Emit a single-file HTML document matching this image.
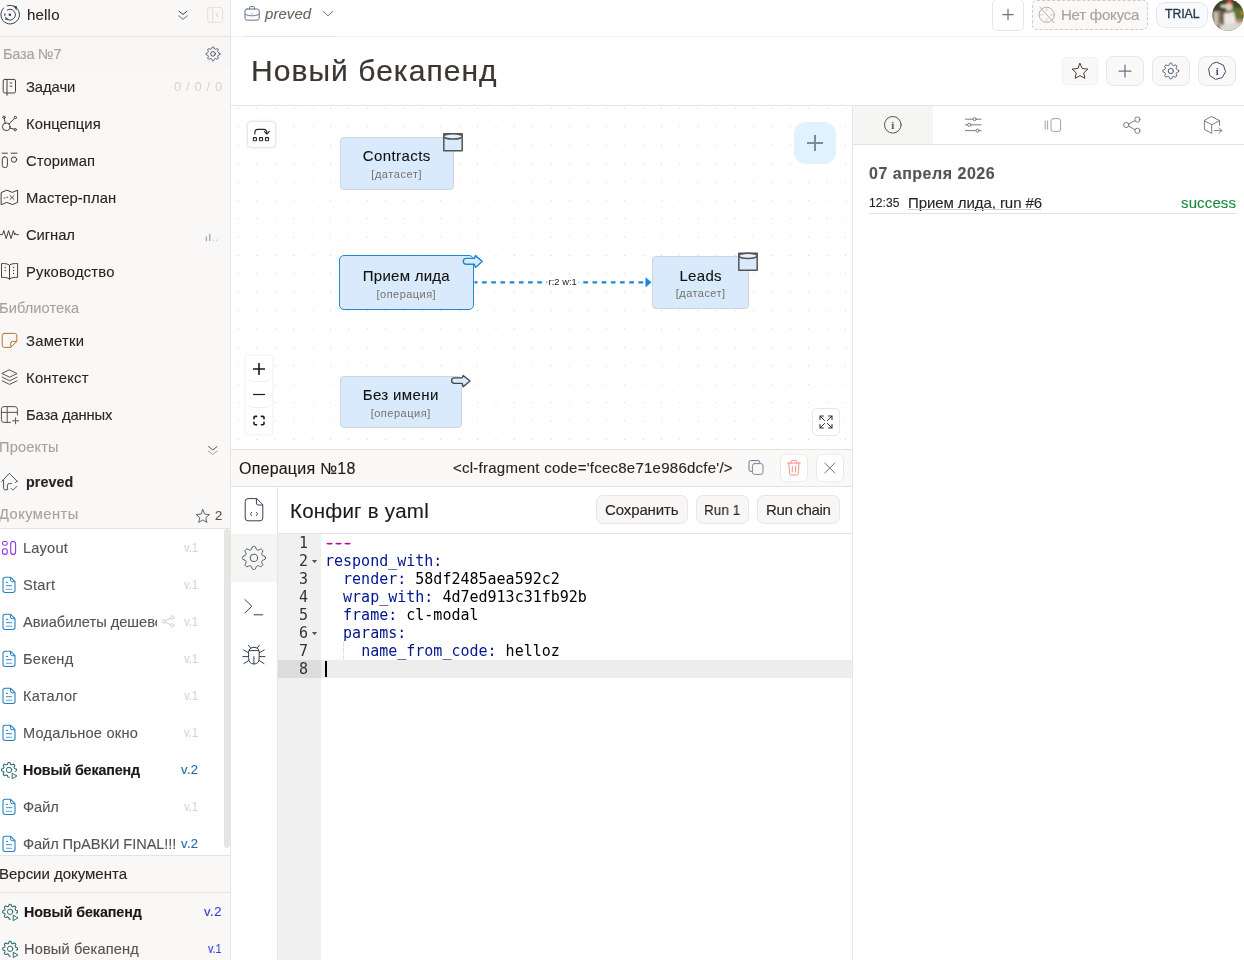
<!DOCTYPE html>
<html lang="ru">
<head>
<meta charset="utf-8">
<title>Новый бекапенд</title>
<style>
*{box-sizing:border-box;margin:0;padding:0}
html,body{width:1244px;height:960px;overflow:hidden;background:#fff}
body{font-family:"Liberation Sans",sans-serif;color:#292524;position:relative;font-size:15px}
.abs{position:absolute}
.t{white-space:nowrap;-webkit-text-stroke:.12px}
.n1{-webkit-text-stroke:.1px}
.t,.n1,.n2,.code,.ln{will-change:transform}
svg{display:block;overflow:visible}
.ic{position:absolute;fill:none;stroke:#44403c;stroke-width:1.1;stroke-linecap:round;stroke-linejoin:round}
/* sidebar */
#sb{position:absolute;left:0;top:0;width:231px;height:960px;background:#f9f8f6;border-right:1px solid #e7e5e4}
#sb .t{position:absolute;white-space:nowrap;line-height:20px;height:20px}
.nav{font-size:14.8px;color:#292524;left:26px}
.sec{font-size:14.6px;color:#a8a29e;left:0}
.doc{font-size:14.6px;color:#57534e;left:23px}
.ver{font-size:13px;color:#d6d3d1}

.hl{position:absolute;left:0;width:230px;height:1px;background:#e6e4e2}
/* main */
#top{position:absolute;left:231px;top:0;width:1013px;height:37px;background:#fff}
#hdr{position:absolute;left:231px;top:37px;width:1013px;height:69px;background:#fff;border-bottom:1px solid #e7e5e4}
.btn{position:absolute;border:1px solid #e5e7eb;border-radius:6px;background:#faf9f7}
#cv{position:absolute;left:231px;top:105px;width:621px;height:345px;background:#fff;
 background-image:radial-gradient(circle,#cdcdd6 0.5px,transparent 0.95px);background-size:18.4px 18.4px;background-position:-1.7px -5.9px;overflow:hidden}
.node{position:absolute;background:#d8eafc;border:1px solid #d0d5da;border-radius:4px;text-align:center}
.node .n1{font-size:15px;color:#111;line-height:18px;margin-top:9px;white-space:nowrap;letter-spacing:.3px}
.node .n2{font-size:11px;color:#78716c;line-height:13px;margin-top:3.6px;white-space:nowrap;letter-spacing:.55px}
#rp{position:absolute;left:852px;top:105px;width:392px;height:855px;background:#fff;border-left:1px solid #e7e5e4}
#bp{position:absolute;left:231px;top:450px;width:621px;height:510px;background:#fff}
.code{position:absolute;left:94px;font-family:"DejaVu Sans Mono","Liberation Mono",monospace;font-size:15px;line-height:18px;height:18px;white-space:pre;color:#000}
.ln{position:absolute;font-family:"DejaVu Sans Mono","Liberation Mono",monospace;font-size:15px;line-height:18px;height:18px;color:#333;width:30px;text-align:right;left:47px}
.k{color:#00168e}
</style>
</head>
<body>
<div id="sb">
  <div id="t1" class="t" style="left:27px;top:5px;font-size:15px;color:#292524;letter-spacing:0.199px;left:27.10px;">hello</div>
  <div class="hl" style="top:36px"></div>
  <div class="abs" style="left:0;top:37px;width:230px;height:31px;background:#f7f6f4"></div>
  <div id="t2" class="t sec" style="left:3px;top:44px;letter-spacing:-0.262px;left:2.90px;">База №7</div>

  <div id="t3" class="t nav" style="top:77px;letter-spacing:-0.078px;left:25.80px;">Задачи</div>
  <div id="t4" class="t" style="left:174px;top:77px;font-size:13px;color:#d6d3d1;letter-spacing:.3px;-webkit-text-stroke:0;letter-spacing:0.603px;left:174.10px;">0 / 0 / 0</div>
  <div id="t5" class="t nav" style="top:114px;letter-spacing:0.046px;left:25.80px;">Концепция</div>
  <div id="t6" class="t nav" style="top:151px;letter-spacing:0.080px;left:25.80px;">Сторимап</div>
  <div id="t7" class="t nav" style="top:188px;letter-spacing:0.103px;left:25.80px;">Мастер-план</div>
  <div id="t8" class="t nav" style="top:225px;letter-spacing:-0.078px;left:25.80px;">Сигнал</div>
  <div id="t9" class="t nav" style="top:262px;letter-spacing:0.192px;left:25.80px;">Руководство</div>
  <div id="t10" class="t sec" style="top:298px;letter-spacing:0.082px;left:-0.90px;">Библиотека</div>
  <div id="t11" class="t nav" style="top:331px;letter-spacing:0.234px;left:25.80px;">Заметки</div>
  <div id="t12" class="t nav" style="top:368px;letter-spacing:0.259px;left:25.80px;">Контекст</div>
  <div id="t13" class="t nav" style="top:405px;letter-spacing:-0.184px;left:25.80px;">База данных</div>
  <div id="t14" class="t sec" style="top:437px;letter-spacing:0.173px;left:-0.60px;">Проекты</div>
  <div id="t15" class="t nav" style="top:472px;font-weight:bold;font-size:14.3px;letter-spacing:0.062px;left:25.80px;">preved</div>
  <div id="t16" class="t sec" style="top:504px;letter-spacing:0.496px;left:-0.60px;">Документы</div>
  <div id="t17" class="t" style="left:214px;top:506px;font-size:13px;color:#57534e;letter-spacing:-0.334px;left:214.90px;">2</div>
  <div class="hl" style="top:528px"></div>

  <div class="abs" id="docs" style="left:0;top:529px;width:230px;height:326px;background:#fff"></div>
  <div class="abs" style="left:224px;top:529px;width:6px;height:319px;background:#e7e5e4;border-radius:3px"></div>

  <div id="t18" class="t doc" style="top:538px;letter-spacing:0.194px;left:22.70px;">Layout</div><div id="t19" class="t ver" style="left:184px;top:538px;transform:scaleX(0.860);transform-origin:0 50%;left:184.20px;">v.1</div>
  <div id="t20" class="t doc" style="top:575px;letter-spacing:0.293px;left:22.70px;">Start</div><div id="t21" class="t ver" style="left:184px;top:575px;transform:scaleX(0.860);transform-origin:0 50%;left:184.20px;">v.1</div>
  <div id="t22" class="t doc" style="top:612px;width:134px;overflow:hidden;letter-spacing:0.004px;left:22.70px;">Авиабилеты дешевого</div><div id="t23" class="t ver" style="left:184px;top:612px;transform:scaleX(0.860);transform-origin:0 50%;left:184.20px;">v.1</div>
  <div id="t24" class="t doc" style="top:649px;letter-spacing:0.253px;left:22.70px;">Бекенд</div><div id="t25" class="t ver" style="left:184px;top:649px;transform:scaleX(0.860);transform-origin:0 50%;left:184.20px;">v.1</div>
  <div id="t26" class="t doc" style="top:686px;letter-spacing:0.256px;left:22.70px;">Каталог</div><div id="t27" class="t ver" style="left:184px;top:686px;transform:scaleX(0.860);transform-origin:0 50%;left:184.20px;">v.1</div>
  <div id="t28" class="t doc" style="top:723px;letter-spacing:0.224px;left:22.70px;">Модальное окно</div><div id="t29" class="t ver" style="left:184px;top:723px;transform:scaleX(0.860);transform-origin:0 50%;left:184.20px;">v.1</div>
  <div id="t30" class="t doc" style="top:760px;font-weight:bold;font-size:14.3px;color:#1c1917;letter-spacing:-0.147px;left:22.70px;">Новый бекапенд</div><div id="t31" class="t ver" style="left:181px;top:760px;color:#1d6fa5;letter-spacing:0.355px;left:180.80px;">v.2</div>
  <div id="t32" class="t doc" style="top:797px;letter-spacing:-0.030px;left:22.70px;">Файл</div><div id="t33" class="t ver" style="left:184px;top:797px;transform:scaleX(0.860);transform-origin:0 50%;left:184.20px;">v.1</div>
  <div id="t34" class="t doc" style="top:834px;letter-spacing:-0.062px;left:22.70px;">Файл ПрАВКИ FINAL!!!</div><div id="t35" class="t ver" style="left:181px;top:834px;color:#1d6fa5;letter-spacing:0.355px;left:180.80px;">v.2</div>

  <div class="hl" style="top:855px"></div>

  <svg class="abs" style="left:0;top:0" width="231" height="960" viewBox="0 0 231 960" fill="none" stroke="#44403c" stroke-width="1" stroke-linecap="round" stroke-linejoin="round">
    <!-- logo -->
    <g stroke="#334155">
      <path d="M7.2 5.8 A9.3 9.3 0 1 1 3.6 8"/>
      <path d="M13.2 5.6 L17.2 6.6 L16.4 10.2 Z" fill="#334155" stroke="none"/>
      <path d="M7.3 10.1 A5.3 5.3 0 1 1 6.6 18.8"/>
      <path d="M4.9 13.6 L4.9 15.6"/>
      <path d="M5.2 16.6 L8.6 19.6 L5.6 20 Z" fill="#334155" stroke="none"/>
      <circle cx="9.9" cy="14.7" r="1.3" fill="#334155" stroke="none"/>
    </g>
    <!-- double chevrons -->
    <path d="M179.1 11.3 L183 14.4 L186.9 11.3" stroke="#334155"/>
    <path d="M178.6 15.8 L183 19.3 L187.4 15.8" stroke="#94a3b8" stroke-width="1.2"/>
    <path d="M208.6 446.6 L212.8 450 L217 446.6" stroke="#57534e"/>
    <path d="M208.2 451 L212.8 454.6 L217.4 451" stroke="#a8a29e"/>
    <!-- collapse -->
    <g stroke="#e3dfdc">
      <rect x="207.6" y="7.4" width="15" height="15" rx="2.6"/>
      <path d="M212.7 7.4 V22.4"/>
      <path d="M217.8 13 L216.2 14.9 L217.8 16.8" stroke="#d6d3d1"/>
    </g>
    <!-- gear -->
    <path d="M219.85 53.90 L219.84 54.35 L219.58 54.77 L218.88 55.07 L218.18 55.29 L217.88 55.56 L217.76 55.87 L217.62 56.18 L217.64 56.58 L217.99 57.23 L218.27 57.94 L218.15 58.42 L217.84 58.74 L217.52 59.05 L217.04 59.17 L216.33 58.89 L215.68 58.54 L215.28 58.52 L214.97 58.66 L214.66 58.78 L214.39 59.08 L214.17 59.78 L213.87 60.48 L213.45 60.74 L213.00 60.75 L212.55 60.74 L212.13 60.48 L211.83 59.78 L211.61 59.08 L211.34 58.78 L211.03 58.66 L210.72 58.52 L210.32 58.54 L209.67 58.89 L208.96 59.17 L208.48 59.05 L208.16 58.74 L207.85 58.42 L207.73 57.94 L208.01 57.23 L208.36 56.58 L208.38 56.18 L208.24 55.87 L208.12 55.56 L207.82 55.29 L207.12 55.07 L206.42 54.77 L206.16 54.35 L206.15 53.90 L206.16 53.45 L206.42 53.03 L207.12 52.73 L207.82 52.51 L208.12 52.24 L208.24 51.93 L208.38 51.62 L208.36 51.22 L208.01 50.57 L207.73 49.86 L207.85 49.38 L208.16 49.06 L208.48 48.75 L208.96 48.63 L209.67 48.91 L210.32 49.26 L210.72 49.28 L211.03 49.14 L211.34 49.02 L211.61 48.72 L211.83 48.02 L212.13 47.32 L212.55 47.06 L213.00 47.05 L213.45 47.06 L213.87 47.32 L214.17 48.02 L214.39 48.72 L214.66 49.02 L214.97 49.14 L215.28 49.28 L215.68 49.26 L216.33 48.91 L217.04 48.63 L217.52 48.75 L217.84 49.06 L218.15 49.38 L218.27 49.86 L217.99 50.57 L217.64 51.22 L217.62 51.62 L217.76 51.93 L217.88 52.24 L218.18 52.51 L218.88 52.73 L219.58 53.03 L219.84 53.45 L219.85 53.90Z" stroke="#475569"/>
    <circle cx="213" cy="53.9" r="2.3" stroke="#475569"/>
    <!-- tasks notebook -->
    <rect x="3.2" y="79.4" width="12.3" height="13.6" rx="1.6"/>
    <path d="M7 79.4 V95.3 M10.2 83 H11.8 M10.2 86.2 H11.8"/>
    <!-- concept graph -->
    <circle cx="6.2" cy="126.8" r="3.8"/>
    <circle cx="3.9" cy="117.3" r="1.2"/><circle cx="15.3" cy="117.5" r="1.2"/><circle cx="15.2" cy="129.6" r="1.2"/>
    <path d="M4.3 118.6 L5.2 123 M14.4 118.5 L8.9 124 M9.8 128 L14 129.2"/>
    <!-- storymap -->
    <path d="M2.2 153.2 H7.4 M11.2 153.2 H17"/>
    <rect x="2.3" y="157" width="5.1" height="10.4" rx="1.8"/>
    <circle cx="14" cy="159.6" r="2.7"/>
    <!-- map -->
    <path d="M1.5 192.4 L6.8 190.2 L12.4 192.4 L17.6 190.2 V202.4 L12.4 204.6 L6.8 202.4 L1.5 204.6 Z"/>
    <path d="M10 195.6 L14 199.4 M14 195.6 L10 199.4 M4 198 H5 M6.8 197.3 H7.8" stroke-width=".9"/>
    <!-- signal -->
    <path d="M0.3 234.6 H2.4 L3.8 230.6 L6.2 238.6 L8.6 230.6 L11 238.6 L13.4 230.6 L14.8 235 L15.6 233.4 L16.4 234.6 H18.4"/>
    <!-- guide book -->
    <path d="M9.5 265.2 C8 263.6 4 263.4 1.5 263.6 V277.4 C4 277.2 8 277.4 9.5 279.2 C11 277.4 15 277.2 17.6 277.4 V263.6 C15 263.4 11 263.6 9.5 265.2 V279.2"/>
    <path d="M5.2 267.3 V267.5 M5.2 270.3 V270.5 M13.6 267.3 V267.5 M13.6 270.3 V270.5 M13.6 273.3 V273.5" stroke-width="1.3"/>
    <!-- signal bars -->
    <path d="M206.4 237 V240.6 M209.8 234.2 V240.6" stroke="#94a3b8" stroke-width="1.3"/>
    <path d="M213.2 239.8 V240.6 M216.6 239.8 V240.6" stroke="#cbd5e1" stroke-width="1.3"/>
    <!-- notes -->
    <path d="M4.4 333.4 H14.6 A2.2 2.2 0 0 1 16.8 335.6 V341.5 L10.6 347.4 H4.4 A2.2 2.2 0 0 1 2.2 345.2 V335.6 A2.2 2.2 0 0 1 4.4 333.4 Z M16.6 341.4 H12.4 A1.6 1.6 0 0 0 10.8 343 V347.2" stroke="#b87333"/>
    <!-- layers -->
    <path d="M9.6 370 L17 373.6 L9.6 377.2 L2.2 373.6 Z M2.2 377.2 L9.6 380.8 L17 377.2 M2.2 380.8 L9.6 384.4 L17 380.8" stroke-width=".9"/>
    <!-- table plus -->
    <path d="M17.4 415 V409.2 A2.6 2.6 0 0 0 14.8 406.6 H4 A2.6 2.6 0 0 0 1.4 409.2 V419.8 A2.6 2.6 0 0 0 4 422.4 H10.4 M1.4 412.4 H17.4 M7.2 406.6 V422.4" stroke="#57534e"/>
    <path d="M12.6 420.8 H18.6 M15.6 417.8 V423.8" stroke="#57534e"/>
    <!-- home -->
    <g stroke="#475569">
      <path d="M1.6 481.4 L9.4 473.4 L17.4 481.6 M3.6 480 V488.4 Q3.6 489.8 5 489.8 H7.4 V485.4 Q7.4 483.6 9.2 483.6 H11.4"/>
      <path d="M11.2 488.4 L13 490.2 L17 486.2" stroke-width=".9"/>
      <path d="M15.4 482.6 L17.2 481.2" stroke-width=".9"/>
    </g>
    <!-- star -->
    <path d="M202.8 509.6 L204.7 514.1 L209.5 514.5 L205.8 517.7 L206.9 522.4 L202.8 519.9 L198.7 522.4 L199.8 517.7 L196.1 514.5 L200.9 514.1 Z" stroke="#475569" stroke-width=".9"/>
    <!-- doc icons -->
    <g stroke="#9333ea" stroke-width="1.1"><rect x="2.4" y="541.5" width="4.9" height="3.8" rx="1.9"/><rect x="2.4" y="548.8" width="4.9" height="5.6" rx="2.3"/><rect x="10.7" y="541.5" width="4.9" height="12.9" rx="2.3"/></g>
    <path d="M5.2 577.3 H10.6 L15 581.7 V590.3 Q15 592.5 12.8 592.5 H5.2 Q3 592.5 3 590.3 V579.5 Q3 577.3 5.2 577.3 Z" stroke="#2480c2" stroke-width="1.1"/><path d="M10.5 577.7 V579.9 Q10.5 581.7 12.3 581.7 H14.6" stroke="#2480c2" stroke-width="1"/><path d="M6.3 582.4 H7.7" stroke="#2480c2" stroke-width="1"/><path d="M6.3 585.6 H11.7 M6.3 589.2 H11.7" stroke="#5ea2d2" stroke-width="1.1"/>
    <path d="M5.2 614.3 H10.6 L15 618.7 V627.3 Q15 629.5 12.8 629.5 H5.2 Q3 629.5 3 627.3 V616.5 Q3 614.3 5.2 614.3 Z" stroke="#2480c2" stroke-width="1.1"/><path d="M10.5 614.7 V616.9 Q10.5 618.7 12.3 618.7 H14.6" stroke="#2480c2" stroke-width="1"/><path d="M6.3 619.4 H7.7" stroke="#2480c2" stroke-width="1"/><path d="M6.3 622.6 H11.7 M6.3 626.2 H11.7" stroke="#5ea2d2" stroke-width="1.1"/>
    <path d="M5.2 651.3 H10.6 L15 655.7 V664.3 Q15 666.5 12.8 666.5 H5.2 Q3 666.5 3 664.3 V653.5 Q3 651.3 5.2 651.3 Z" stroke="#2480c2" stroke-width="1.1"/><path d="M10.5 651.7 V653.9 Q10.5 655.7 12.3 655.7 H14.6" stroke="#2480c2" stroke-width="1"/><path d="M6.3 656.4 H7.7" stroke="#2480c2" stroke-width="1"/><path d="M6.3 659.6 H11.7 M6.3 663.2 H11.7" stroke="#5ea2d2" stroke-width="1.1"/>
    <path d="M5.2 688.3 H10.6 L15 692.7 V701.3 Q15 703.5 12.8 703.5 H5.2 Q3 703.5 3 701.3 V690.5 Q3 688.3 5.2 688.3 Z" stroke="#2480c2" stroke-width="1.1"/><path d="M10.5 688.7 V690.9 Q10.5 692.7 12.3 692.7 H14.6" stroke="#2480c2" stroke-width="1"/><path d="M6.3 693.4 H7.7" stroke="#2480c2" stroke-width="1"/><path d="M6.3 696.6 H11.7 M6.3 700.2 H11.7" stroke="#5ea2d2" stroke-width="1.1"/>
    <path d="M5.2 725.3 H10.6 L15 729.7 V738.3 Q15 740.5 12.8 740.5 H5.2 Q3 740.5 3 738.3 V727.5 Q3 725.3 5.2 725.3 Z" stroke="#2480c2" stroke-width="1.1"/><path d="M10.5 725.7 V727.9 Q10.5 729.7 12.3 729.7 H14.6" stroke="#2480c2" stroke-width="1"/><path d="M6.3 730.4 H7.7" stroke="#2480c2" stroke-width="1"/><path d="M6.3 733.6 H11.7 M6.3 737.2 H11.7" stroke="#5ea2d2" stroke-width="1.1"/>
    <path d="M5.2 799.3 H10.6 L15 803.7 V812.3 Q15 814.5 12.8 814.5 H5.2 Q3 814.5 3 812.3 V801.5 Q3 799.3 5.2 799.3 Z" stroke="#2480c2" stroke-width="1.1"/><path d="M10.5 799.7 V801.9 Q10.5 803.7 12.3 803.7 H14.6" stroke="#2480c2" stroke-width="1"/><path d="M6.3 804.4 H7.7" stroke="#2480c2" stroke-width="1"/><path d="M6.3 807.6 H11.7 M6.3 811.2 H11.7" stroke="#5ea2d2" stroke-width="1.1"/>
    <path d="M5.2 836.3 H10.6 L15 840.7 V849.3 Q15 851.5 12.8 851.5 H5.2 Q3 851.5 3 849.3 V838.5 Q3 836.3 5.2 836.3 Z" stroke="#2480c2" stroke-width="1.1"/><path d="M10.5 836.7 V838.9 Q10.5 840.7 12.3 840.7 H14.6" stroke="#2480c2" stroke-width="1"/><path d="M6.3 841.4 H7.7" stroke="#2480c2" stroke-width="1"/><path d="M6.3 844.6 H11.7 M6.3 848.2 H11.7" stroke="#5ea2d2" stroke-width="1.1"/>
    <path d="M9.26 777.30 L8.77 777.30 L8.28 777.27 L7.87 776.73 L7.60 775.91 L7.34 775.35 L6.98 775.23 L6.64 775.09 L6.30 774.92 L5.70 775.17 L4.92 775.55 L4.28 775.60 L3.91 775.27 L3.57 774.93 L3.25 774.56 L3.41 773.84 L3.81 773.07 L3.95 772.54 L3.79 772.20 L3.65 771.85 L3.53 771.50 L2.85 771.26 L2.03 770.97 L1.63 770.53 L1.60 770.04 L1.61 769.56 L1.65 769.07 L2.35 768.70 L3.18 768.44 L3.57 768.16 L3.70 767.80 L3.85 767.46 L4.02 767.12 L3.64 766.42 L3.28 765.63 L3.38 765.09 L3.71 764.73 L4.06 764.39 L4.45 764.10 L5.24 764.40 L5.99 764.80 L6.43 764.81 L6.78 764.65 L7.13 764.52 L7.47 764.35 L7.70 763.55 L8.02 762.75 L8.48 762.52 L8.97 762.50 L9.46 762.51 L9.93 762.66 L10.27 763.45 L10.50 764.25 L10.83 764.50 L11.18 764.63 L11.52 764.79 L11.92 764.85 L12.66 764.44 L13.45 764.12 L13.89 764.35 L14.25 764.69 L14.58 765.04 L14.75 765.53 L14.41 766.32 L14.01 767.05 L14.13 767.41 L14.28 767.76 L14.41 768.11 L14.73 768.42 L15.54 768.66 L16.32 769.01 L16.39 769.49 L16.40 769.98 L16.38 770.47 L16.07 770.92 L15.26 771.23" stroke="#2f6f6f" stroke-width="1.1"/><circle cx="9" cy="769.9" r="2.7" stroke="#2f6f6f" stroke-width="1"/><path d="M12.5 773.5 L16.9 776.0 L12.5 778.5 Z" stroke="#2f6f6f" stroke-width="1"/>
    <path d="M10.36 919.20 L9.87 919.20 L9.38 919.17 L8.97 918.63 L8.70 917.81 L8.44 917.25 L8.08 917.13 L7.74 916.99 L7.40 916.82 L6.80 917.07 L6.02 917.45 L5.38 917.50 L5.01 917.17 L4.67 916.83 L4.35 916.46 L4.51 915.74 L4.91 914.97 L5.05 914.44 L4.89 914.10 L4.75 913.75 L4.63 913.40 L3.95 913.16 L3.13 912.87 L2.73 912.43 L2.70 911.94 L2.71 911.46 L2.75 910.97 L3.45 910.60 L4.28 910.34 L4.67 910.06 L4.80 909.70 L4.95 909.36 L5.12 909.02 L4.74 908.32 L4.38 907.53 L4.48 906.99 L4.81 906.63 L5.16 906.29 L5.55 906.00 L6.34 906.30 L7.09 906.70 L7.53 906.71 L7.88 906.55 L8.23 906.42 L8.57 906.25 L8.80 905.45 L9.12 904.65 L9.58 904.42 L10.07 904.40 L10.56 904.41 L11.03 904.56 L11.37 905.35 L11.60 906.15 L11.93 906.40 L12.28 906.53 L12.62 906.69 L13.02 906.75 L13.76 906.34 L14.55 906.02 L14.99 906.25 L15.35 906.59 L15.68 906.94 L15.85 907.43 L15.51 908.22 L15.11 908.95 L15.23 909.31 L15.38 909.66 L15.51 910.01 L15.83 910.32 L16.64 910.56 L17.42 910.91 L17.49 911.39 L17.50 911.88 L17.48 912.37 L17.17 912.82 L16.36 913.13" stroke="#2f6f6f" stroke-width="1.1"/><circle cx="10.1" cy="911.8" r="2.7" stroke="#2f6f6f" stroke-width="1"/><path d="M13.6 915.4 L18 917.9 L13.6 920.4 Z" stroke="#2f6f6f" stroke-width="1"/>
    <path d="M10.36 956.20 L9.87 956.20 L9.38 956.17 L8.97 955.63 L8.70 954.81 L8.44 954.25 L8.08 954.13 L7.74 953.99 L7.40 953.82 L6.80 954.07 L6.02 954.45 L5.38 954.50 L5.01 954.17 L4.67 953.83 L4.35 953.46 L4.51 952.74 L4.91 951.97 L5.05 951.44 L4.89 951.10 L4.75 950.75 L4.63 950.40 L3.95 950.16 L3.13 949.87 L2.73 949.43 L2.70 948.94 L2.71 948.46 L2.75 947.97 L3.45 947.60 L4.28 947.34 L4.67 947.06 L4.80 946.70 L4.95 946.36 L5.12 946.02 L4.74 945.32 L4.38 944.53 L4.48 943.99 L4.81 943.63 L5.16 943.29 L5.55 943.00 L6.34 943.30 L7.09 943.70 L7.53 943.71 L7.88 943.55 L8.23 943.42 L8.57 943.25 L8.80 942.45 L9.12 941.65 L9.58 941.42 L10.07 941.40 L10.56 941.41 L11.03 941.56 L11.37 942.35 L11.60 943.15 L11.93 943.40 L12.28 943.53 L12.62 943.69 L13.02 943.75 L13.76 943.34 L14.55 943.02 L14.99 943.25 L15.35 943.59 L15.68 943.94 L15.85 944.43 L15.51 945.22 L15.11 945.95 L15.23 946.31 L15.38 946.66 L15.51 947.01 L15.83 947.32 L16.64 947.56 L17.42 947.91 L17.49 948.39 L17.50 948.88 L17.48 949.37 L17.17 949.82 L16.36 950.13" stroke="#2f6f6f" stroke-width="1.1"/><circle cx="10.1" cy="948.8" r="2.7" stroke="#2f6f6f" stroke-width="1"/><path d="M13.6 952.4 L18 954.9 L13.6 957.4 Z" stroke="#2f6f6f" stroke-width="1"/>
    <g stroke="#d3cfcb" stroke-width="1"><circle cx="163.6" cy="621.4" r="1.7"/><circle cx="172.3" cy="617.5" r="1.7"/><circle cx="172.3" cy="625.4" r="1.7"/><path d="M165.2 620.6 L170.7 618.2 M165.2 622.2 L170.7 624.7"/></g>
  </svg>

  <div id="t36" class="t" style="left:0;top:864px;font-size:15px;color:#292524;letter-spacing:-0.018px;left:-1.10px;">Версии документа</div>
  <div class="hl" style="top:892px"></div>
  <div id="t37" class="t" style="left:24px;top:901.5px;font-size:14.3px;font-weight:bold;color:#1c1917;letter-spacing:-0.094px;left:23.50px;">Новый бекапенд</div><div id="t38" class="t ver" style="left:205px;top:902px;color:#2a3fd6;letter-spacing:0.505px;left:204.40px;">v.2</div>
  <div id="t39" class="t" style="left:24px;top:938.5px;font-size:14.6px;color:#57534e;letter-spacing:0.150px;left:23.50px;">Новый бекапенд</div><div id="t40" class="t ver" style="left:208px;top:939px;color:#2a3fd6;transform:scaleX(0.818);transform-origin:0 50%;left:208.40px;">v.1</div>
</div>

<div id="top">
  <div class="abs" style="left:0;top:36px;width:1013px;height:1px;background:#f5f4f3"></div>
  <div class="abs" style="left:12px;top:36px;width:94px;height:1px;background:#eae8e6"></div>
  <div id="t41" class="abs t" style="left:34px;top:4px;font-size:15px;font-style:italic;color:#6b635c;line-height:20px;letter-spacing:-.1px;letter-spacing:0.065px;left:33.60px;">preved</div>
  <div class="btn" style="left:761px;top:-1px;width:32px;height:32px;background:#fff;border-color:#e5e7eb;border-radius:5px"></div>
  <div class="btn" style="left:801px;top:0px;width:116px;height:30px;border-style:dashed;border-color:#cfcbc7;border-radius:5px;background:#faf9f7"></div>
  <div id="t42" class="abs t" style="left:830px;top:5px;font-size:15px;color:#a8a29e;line-height:20px;letter-spacing:-0.213px;left:829.70px;">Нет фокуса</div>
  <div class="btn" style="left:925px;top:2px;width:52px;height:26px;border-radius:9px;background:#f8fafc;border-color:#e4e8ee"></div>
  <div id="t43" class="abs t" style="left:934px;top:5px;font-size:12.3px;color:#27364b;line-height:18px;-webkit-text-stroke:.3px #27364b;letter-spacing:-0.090px;left:933.80px;">TRIAL</div>
  <svg class="abs" style="left:0;top:0" width="1013" height="37" viewBox="231 0 1013 37" fill="none" stroke-linecap="round" stroke-linejoin="round">
    <defs>
      <clipPath id="avc"><circle cx="1228" cy="15.1" r="15.6"/></clipPath>
      <filter id="avb" x="-20%" y="-20%" width="140%" height="140%"><feGaussianBlur stdDeviation="1.3"/></filter>
    </defs>
    <!-- briefcase -->
    <g stroke="#64748b" stroke-width="1">
      <rect x="245" y="9" width="14.2" height="11.2" rx="2" fill="#fafbfc"/>
      <path d="M249.6 9 V7.8 Q249.6 6.6 250.8 6.6 H253.4 Q254.6 6.6 254.6 7.8 V9"/>
      <path d="M245 14.4 Q252 17.4 259.2 14.4" stroke-width=".9"/>
      <path d="M252.1 13.6 V14" stroke="#94a3b8"/>
    </g>
    <path d="M323.2 11.4 L328 15.8 L332.8 11.4" stroke="#64748b" stroke-width="1"/>
    <!-- plus -->
    <path d="M1002.8 14.6 H1013.2 M1008 9.4 V19.8" stroke="#64748b" stroke-width="1.2"/>
    <!-- no focus -->
    <g stroke="#b5afa9" stroke-width="1">
      <circle cx="1046.7" cy="14.8" r="7.6"/>
      <path d="M1040.2 7.4 L1054 22.8"/>
      <path d="M1046.7 8.6 V10.6 M1046.7 19 V21 M1040.6 14.8 H1042.6 M1050.8 14.8 H1052.8" stroke="#cdc8c3"/>
    </g>
    <!-- avatar -->
    <g clip-path="url(#avc)">
      <rect x="1212" y="-1" width="32" height="33" fill="#5a5a40"/>
      <g filter="url(#avb)">
        <rect x="1212" y="-1" width="32" height="12" fill="#3c4428"/>
        <rect x="1212" y="11" width="9" height="16" fill="#8a7a68"/>
        <rect x="1214" y="12" width="4" height="14" fill="#c9beb2"/>
        <rect x="1232" y="8" width="12" height="12" fill="#5f7436"/>
        <rect x="1231" y="19" width="13" height="5" fill="#b88a72"/>
        <rect x="1220" y="23" width="24" height="9" fill="#d9dad6"/>
        <ellipse cx="1229" cy="7" rx="3.6" ry="4" fill="#e2cbbb"/>
        <path d="M1224 13 L1234 12 L1236 23 L1222 25 Z" fill="#eee6e0"/>
        <rect x="1221" y="16" width="3" height="9" fill="#6a5648"/>
        <rect x="1221" y="5" width="6" height="2.5" fill="#dcdcd4"/>
        <circle cx="1229.5" cy="1.5" r="2" fill="#e0403a"/>
        <circle cx="1242" cy="13" r="1.6" fill="#e8702a"/>
      </g>
    </g>
  </svg>
</div>

<div id="hdr">
  <div id="t44" class="abs t" style="left:20px;top:16px;font-size:30px;line-height:36px;color:#3b3632;-webkit-text-stroke:.2px #3b3632;letter-spacing:1.050px;left:19.90px;">Новый бекапенд</div>
  <div class="btn" style="left:831px;top:20px;width:36px;height:28px;border-color:#f3f2f0;border-radius:4px;background:#faf9f7"></div>
  <div class="btn" style="left:875px;top:19px;width:38px;height:30px;border-radius:8px;border-color:#e4e7ec"></div>
  <div class="btn" style="left:921px;top:19px;width:38px;height:30px;border-radius:8px;border-color:#e4e7ec"></div>
  <div class="btn" style="left:967px;top:19px;width:38px;height:30px;border-radius:8px;border-color:#e4e7ec"></div>
  <svg class="abs" style="left:0;top:0" width="1013" height="68" viewBox="231 37 1013 68" fill="none" stroke-linecap="round" stroke-linejoin="round">
    <path d="M1080 63.4 L1082.3 68.5 L1087.9 69.1 L1083.7 72.9 L1084.9 78.4 L1080 75.6 L1075.1 78.4 L1076.3 72.9 L1072.1 69.1 L1077.7 68.5 Z" stroke="#44403c" stroke-width="1"/>
    <path d="M1119 71 H1131 M1125 65 V77" stroke="#67748a" stroke-width="1.25"/>
    <path d="M1178.65 71.00 L1178.63 71.51 L1178.35 71.99 L1177.57 72.35 L1176.78 72.60 L1176.43 72.91 L1176.30 73.28 L1176.14 73.63 L1176.16 74.09 L1176.54 74.83 L1176.84 75.63 L1176.70 76.18 L1176.35 76.55 L1175.98 76.90 L1175.43 77.04 L1174.63 76.74 L1173.89 76.36 L1173.43 76.34 L1173.08 76.50 L1172.71 76.63 L1172.40 76.98 L1172.15 77.77 L1171.79 78.55 L1171.31 78.83 L1170.80 78.85 L1170.29 78.83 L1169.81 78.55 L1169.45 77.77 L1169.20 76.98 L1168.89 76.63 L1168.52 76.50 L1168.17 76.34 L1167.71 76.36 L1166.97 76.74 L1166.17 77.04 L1165.62 76.90 L1165.25 76.55 L1164.90 76.18 L1164.76 75.63 L1165.06 74.83 L1165.44 74.09 L1165.46 73.63 L1165.30 73.28 L1165.17 72.91 L1164.82 72.60 L1164.03 72.35 L1163.25 71.99 L1162.97 71.51 L1162.95 71.00 L1162.97 70.49 L1163.25 70.01 L1164.03 69.65 L1164.82 69.40 L1165.17 69.09 L1165.30 68.72 L1165.46 68.37 L1165.44 67.91 L1165.06 67.17 L1164.76 66.37 L1164.90 65.82 L1165.25 65.45 L1165.62 65.10 L1166.17 64.96 L1166.97 65.26 L1167.71 65.64 L1168.17 65.66 L1168.52 65.50 L1168.89 65.37 L1169.20 65.02 L1169.45 64.23 L1169.81 63.45 L1170.29 63.17 L1170.80 63.15 L1171.31 63.17 L1171.79 63.45 L1172.15 64.23 L1172.40 65.02 L1172.71 65.37 L1173.08 65.50 L1173.43 65.66 L1173.89 65.64 L1174.63 65.26 L1175.43 64.96 L1175.98 65.10 L1176.35 65.45 L1176.70 65.82 L1176.84 66.37 L1176.54 67.17 L1176.16 67.91 L1176.14 68.37 L1176.30 68.72 L1176.43 69.09 L1176.78 69.40 L1177.57 69.65 L1178.35 70.01 L1178.63 70.49 L1178.65 71.00Z" stroke="#475569" stroke-width="1"/>
    <circle cx="1170.8" cy="71" r="2.6" stroke="#475569" stroke-width="1"/>
    <path d="M1217.1 62.4 L1223.4 65.2 L1225.6 71.6 L1222.2 77.6 L1215.6 79.4 L1209.8 75.6 L1208.6 68.8 L1212.2 63.8 Z" stroke="#3f4a6b" stroke-width="1"/>
    <text x="1217.1" y="75" font-family="Liberation Serif,serif" font-size="10.5" font-weight="bold" fill="#3f4a6b" text-anchor="middle">i</text>
  </svg>
</div>

<div id="cv">
  <div class="abs" style="left:0;top:0;width:621px;height:1px;background:#e7e5e4"></div>
  <div class="abs" style="left:0;top:344px;width:621px;height:1px;background:#e4e2df"></div>
  <div class="abs" style="left:15.6px;top:16.4px;width:29px;height:27px;background:#fff;border:1px solid #e9e6e3;border-radius:4px;box-shadow:0 0 3px rgba(0,0,0,.10)"></div>
  <div class="abs" style="left:563px;top:16.8px;width:42px;height:42px;border-radius:12px;background:#e0f2fe"></div>
  <div class="abs" style="left:14.7px;top:250.7px;width:26.6px;height:78.2px;background:#fff;box-shadow:0 0 2px 1px rgba(0,0,0,.06)"></div>
  <div class="abs" style="left:14.7px;top:250.7px;width:26.6px;height:26px;border-bottom:1px solid #eee;border-radius:0 0 8px 8px"></div>
  <div class="abs" style="left:14.7px;top:276.7px;width:26.6px;height:26px;border-bottom:1px solid #eee;border-radius:0 0 8px 8px"></div>
  <div class="abs" style="left:581.3px;top:303.2px;width:27.4px;height:27.5px;background:#fff;border:1px solid #e2e8f0;border-radius:5px"></div>

  <div class="node" style="left:109.3px;top:31.5px;width:113.4px;height:53px"><div id="t45" class="n1" style="letter-spacing:0.412px;">Contracts</div><div id="t46" class="n2" style="letter-spacing:0.571px;">[датасет]</div></div>
  <div class="node" style="left:108.3px;top:150.2px;width:134.7px;height:55px;border:1.3px solid #2088d0;border-radius:5px"><div id="t47" class="n1" style="margin-top:10.6px;letter-spacing:0.249px;">Прием лида</div><div id="t48" class="n2" style="letter-spacing:0.450px;">[операция]</div></div>
  <div class="node" style="left:420.9px;top:151.4px;width:97.3px;height:52.6px"><div id="t49" class="n1" style="margin-top:9.7px;letter-spacing:0.306px;">Leads</div><div id="t50" class="n2" style="margin-top:2.3px;letter-spacing:0.446px;">[датасет]</div></div>
  <div class="node" style="left:109.3px;top:270.5px;width:121.4px;height:52.6px"><div id="t51" class="n1" style="letter-spacing:0.386px;">Без имени</div><div id="t52" class="n2" style="letter-spacing:0.516px;">[операция]</div></div>

  <svg class="abs" style="left:0;top:0" width="621" height="345" viewBox="231 105 621 345" fill="none" stroke-linecap="round" stroke-linejoin="round">
    <!-- flow btn icon -->
    <g stroke="#292524" stroke-width="1.1">
      <path d="M254.9 134 V132.4 Q254.9 129.4 257.9 129.4 H263.6 Q266.8 129.4 266.8 132.6 V133.6"/>
      <path d="M264.4 131.6 L266.9 134 L269.4 131.4"/>
      <rect x="253.3" y="137.6" width="3.2" height="3.2" rx=".9"/><rect x="259.4" y="137.6" width="3.2" height="3.2" rx=".9"/><rect x="265.4" y="137.6" width="3.2" height="3.2" rx=".9"/>
    </g>
    <!-- plus -->
    <path d="M807 142.9 H823 M815 134.9 V150.9" stroke="#6b7a8c" stroke-width="2" stroke-linecap="butt" opacity=".85"/>
    <!-- zoom controls -->
    <g stroke="#1a1a1a" stroke-width="1.6" stroke-linecap="butt">
      <path d="M253 369 H265 M259 363 V375"/>
      <path d="M253 394.5 H265" stroke-width="1.2"/>
      <path d="M254 418.8 V417.6 Q254 416.4 255.2 416.4 H256.6 M261.4 416.4 H262.8 Q264 416.4 264 417.6 V418.8 M264 422.4 V423.6 Q264 424.8 262.8 424.8 H261.4 M256.6 424.8 H255.2 Q254 424.8 254 423.6 V422.4" stroke-linecap="round"/>
    </g>
    <!-- expand -->
    <g stroke="#333" stroke-width="1">
      <path d="M824.6 420.6 L820.2 416.2 M827.4 420.6 L831.8 416.2 M824.6 423.4 L820.2 427.8 M827.4 423.4 L831.8 427.8"/>
      <path d="M820 419.4 V416 H823.4 M828.6 416 H832 V419.4 M820 424.6 V428 H823.4 M828.6 428 H832 V424.6" stroke-width="1.1"/>
    </g>
    <!-- edge -->
    <path d="M474.5 282.4 H646" stroke="#1a87d4" stroke-width="2.3" stroke-dasharray="4.6 4.6" stroke-dashoffset="1.6" stroke-linecap="butt"/>
    <path d="M646 277.9 L651.2 282.3 L646 286.7 Z" fill="#1a87d4" stroke="#1a87d4" stroke-width=".6"/>
    <rect x="547.2" y="276.5" width="31.4" height="11.5" fill="#fff"/>
    <text x="548.6" y="285" font-family="Liberation Sans,sans-serif" font-size="9.4" fill="#222">r:2 w:1</text>
    <!-- cylinders -->
    <g stroke="#555" stroke-width="1.5" fill="#d8eafc">
      <rect x="443.8" y="133.8" width="18.4" height="17"/>
      <ellipse cx="453" cy="136.4" rx="9.2" ry="2.6" fill="#e4f1fe"/>
      <rect x="738.8" y="253.2" width="18.4" height="17"/>
      <ellipse cx="748" cy="255.8" rx="9.2" ry="2.6" fill="#e4f1fe"/>
    </g>
    <!-- arrows -->
    <path d="M474.4 258.4 H466.2 Q463.3 258.4 463.3 261.3 Q463.3 264.2 466.2 264.2 H474.4 L475.4 267.4 L482.2 261.4 L475.4 255.6 Z" stroke="#1e88d0" stroke-width="1.4" fill="#d8eafc"/>
    <path d="M462.2 377.8 H454.4 Q451.6 377.8 451.6 380.6 Q451.6 383.4 454.4 383.4 H462.2 L463.2 386.8 L470 381 L463.2 375.4 Z" stroke="#444" stroke-width="1.3" fill="#d8eafc"/>
  </svg>
</div>

<div id="rp">
  <div class="abs" style="left:0;top:0;width:392px;height:1px;background:#e7e5e4"></div>
  <div class="abs" style="left:0;top:1px;width:80px;height:38px;background:#f5f5f4"></div>
  <div class="abs" style="left:0;top:39px;width:392px;height:1px;background:#e4e2df"></div>
  <div id="t53" class="abs t" style="left:16px;top:59px;font-size:16px;font-weight:bold;color:#57534e;line-height:20px;letter-spacing:0.506px;left:15.70px;">07 апреля 2026</div>
  <div id="t54" class="abs t" style="left:16px;top:90px;font-size:12px;color:#292524;line-height:16px;letter-spacing:0.092px;left:15.70px;">12:35</div>
  <div id="t55" class="abs t" style="left:54px;top:88px;font-size:15px;color:#292524;line-height:20px;letter-spacing:-0.078px;left:54.50px;">Прием лида, run #6</div>
  <div class="abs" style="left:55px;top:104px;width:133px;height:1px;background:#d3cfcb"></div>
  <div id="t56" class="abs t" style="right:8px;top:88px;font-size:15px;color:#1a8a3c;line-height:20px;letter-spacing:0.135px;margin-right:-0.135px;">success</div>
  <div class="abs" style="left:16px;top:108px;width:368px;height:1px;background:#e7e5e4"></div>
  <svg class="abs" style="left:0;top:0" width="392" height="40" viewBox="853 105 392 40" fill="none" stroke-linecap="round" stroke-linejoin="round">
    <circle cx="892.8" cy="124.8" r="8.3" stroke="#57534e" stroke-width="1"/>
    <text x="892.8" y="128.6" font-family="Liberation Serif,serif" font-size="10.5" font-weight="bold" fill="#57534e" text-anchor="middle">i</text>
    <g stroke="#857b74" stroke-width="1">
      <path d="M965.4 119.2 H973 M976.2 119.2 H981 M965.4 124.8 H967.6 M970.8 124.8 H981 M965.4 130.6 H976 M979.2 130.6 H981"/>
      <circle cx="974.6" cy="119.2" r="1.6"/><circle cx="969.2" cy="124.8" r="1.6"/><circle cx="977.6" cy="130.6" r="1.6"/>
    </g>
    <g stroke="#a8a29e" stroke-width="1">
      <path d="M1045.2 121 V129 M1047.6 121 V129"/>
      <rect x="1051" y="118.6" width="9.6" height="12.8" rx="2.4"/>
    </g>
    <g stroke="#857b74" stroke-width="1">
      <circle cx="1126.2" cy="125" r="2.6"/><circle cx="1137.4" cy="119.5" r="2.6"/><circle cx="1137.4" cy="130.8" r="2.6"/>
      <path d="M1128.6 123.8 L1135 120.7 M1128.6 126.2 L1135 129.6"/>
    </g>
    <g stroke="#857b74" stroke-width="1">
      <path d="M1211.7 116.6 L1219.6 120.6 L1211.7 124.8 L1204.4 120.8 Z M1204.4 120.8 V129.4 L1211.7 133.4 V124.8 M1219.6 120.6 V125.4"/>
      <path d="M1214.4 130.6 H1221.8 M1219.2 128 L1221.8 130.6 L1219.2 133.2"/>
    </g>
  </svg>
</div>

<div id="bp">
  <div class="abs" style="left:0;top:0;width:621px;height:37px;background:#faf9f8;border-bottom:1px solid #e4e2df"></div>
  <div id="t57" class="abs t" style="left:8px;top:9.3px;font-size:16px;color:#1c1917;line-height:20px;letter-spacing:.05px;letter-spacing:0.211px;left:7.70px;">Операция №18</div>
  <div id="t58" class="abs t" style="left:222.3px;top:7.6px;font-size:15px;color:#292524;line-height:20px;letter-spacing:.2px;letter-spacing:0.246px;left:221.70px;">&lt;cl-fragment code='fcec8e71e986dcfe'/&gt;</div>
  <div class="btn" style="left:549px;top:4.4px;width:27.6px;height:27.2px;background:#fff;border-color:#eceae8;border-radius:6px"></div>
  <div class="btn" style="left:585px;top:4.4px;width:27.6px;height:27.2px;background:#fff;border-color:#eceae8;border-radius:6px"></div>
  <div class="abs" style="left:0;top:37px;width:47px;height:473px;background:#fff;border-right:1px solid #e7e5e4"></div>
  <div class="abs" style="left:0;top:84px;width:46px;height:48px;background:#f5f5f4"></div>
  <div class="abs" style="left:47px;top:83px;width:574px;height:1px;background:#e7e5e4"></div>
  <div id="t59" class="abs t" style="left:59px;top:47.5px;font-size:20.5px;color:#1c1917;line-height:26px;letter-spacing:.1px;letter-spacing:0.222px;left:59.20px;">Конфиг в yaml</div>
  <div class="btn" style="left:365.2px;top:45px;width:91.5px;height:29.4px;border-color:#e5e7eb;border-radius:7px;background:#f8f7f6"></div>
  <div id="t60" class="abs t" style="left:374.4px;top:49.6px;font-size:15px;line-height:20px;color:#292524;letter-spacing:-0.118px;left:374.00px;">Сохранить</div>
  <div class="btn" style="left:465.1px;top:45px;width:52.6px;height:29.4px;border-color:#e5e7eb;border-radius:7px;background:#f8f7f6"></div>
  <div id="t61" class="abs t" style="left:473.8px;top:49.6px;font-size:15px;line-height:20px;color:#292524;transform:scaleX(0.904);transform-origin:0 50%;left:473.30px;">Run 1</div>
  <div class="btn" style="left:526.1px;top:45px;width:82.5px;height:29.4px;border-color:#e5e7eb;border-radius:7px;background:#f8f7f6"></div>
  <div id="t62" class="abs t" style="left:535.4px;top:49.6px;font-size:15px;line-height:20px;color:#292524;letter-spacing:-0.343px;left:534.90px;">Run chain</div>
  <div class="abs" style="left:47px;top:84px;width:43px;height:426px;background:#f0f0f0"></div>
  <div class="abs" style="left:47px;top:210px;width:43px;height:18px;background:#dcdcdc"></div>
  <div class="abs" style="left:90px;top:210px;width:531px;height:18px;background:#ededed"></div>
  <div class="abs" style="left:94px;top:211px;width:2px;height:16px;background:#000"></div>
  <div class="abs" style="left:112px;top:192px;width:1px;height:18px;background:repeating-linear-gradient(#c8c8c8 0 1px,transparent 1px 2px)"></div>
  <svg class="abs" style="left:0;top:0" width="621" height="510" viewBox="231 450 621 510" fill="none" stroke-linecap="round" stroke-linejoin="round">
    <!-- copy -->
    <g stroke="#64748b" stroke-width="1">
      <path d="M751.6 471.4 H750.6 Q749 471.4 749 469.8 V462.2 Q749 460.6 750.6 460.6 H758.2 Q759.8 460.6 759.8 462.2 V463"/>
      <rect x="752.4" y="463.6" width="10.6" height="10.8" rx="2.2" stroke="#7b8798"/>
    </g>
    <!-- trash -->
    <g stroke="#f98080" stroke-width=".9">
      <path d="M787.6 463 H800.2 M791.2 463 V461.4 Q791.2 460.4 792.2 460.4 H795.6 Q796.6 460.4 796.6 461.4 V463"/>
      <path d="M788.8 463.2 L789.6 473.6 Q789.7 475 791.1 475 H796.7 Q798.1 475 798.2 473.6 L799 463.2"/>
      <path d="M792.3 466.4 V471.8 M795.5 466.4 V471.8"/>
    </g>
    <!-- x -->
    <path d="M824.8 463 L834.8 473 M834.8 463 L824.8 473" stroke="#78716c" stroke-width="1"/>
    <!-- file code -->
    <g stroke="#334155" stroke-width="1">
      <path d="M256.4 498.6 H248 Q245.2 498.6 245.2 501.4 V518 Q245.2 520.8 248 520.8 H260 Q262.8 520.8 262.8 518 V505 Z"/>
      <path d="M256.4 498.8 V503 Q256.4 505 258.4 505 H262.6"/>
      <path d="M251.6 512.4 L250.4 514 L251.6 515.6 M256.4 512.4 L257.6 514 L256.4 515.6" stroke-width=".9"/>
    </g>
    <!-- gear -->
    <path d="M265.40 557.90 L265.38 558.65 L264.95 559.36 L263.81 559.87 L262.64 560.24 L262.14 560.70 L261.94 561.23 L261.70 561.75 L261.74 562.42 L262.30 563.51 L262.75 564.69 L262.55 565.48 L262.03 566.03 L261.48 566.55 L260.69 566.75 L259.51 566.30 L258.43 565.74 L257.75 565.70 L257.23 565.94 L256.70 566.14 L256.24 566.64 L255.87 567.81 L255.36 568.95 L254.65 569.38 L253.90 569.40 L253.15 569.38 L252.44 568.95 L251.93 567.81 L251.56 566.64 L251.10 566.14 L250.57 565.94 L250.05 565.70 L249.38 565.74 L248.29 566.30 L247.11 566.75 L246.32 566.55 L245.77 566.03 L245.25 565.48 L245.05 564.69 L245.50 563.51 L246.06 562.42 L246.10 561.75 L245.86 561.23 L245.66 560.70 L245.16 560.24 L243.99 559.87 L242.85 559.36 L242.42 558.65 L242.40 557.90 L242.42 557.15 L242.85 556.44 L243.99 555.93 L245.16 555.56 L245.66 555.10 L245.86 554.57 L246.10 554.05 L246.06 553.38 L245.50 552.29 L245.05 551.11 L245.25 550.32 L245.77 549.77 L246.32 549.25 L247.11 549.05 L248.29 549.50 L249.38 550.06 L250.05 550.10 L250.57 549.86 L251.10 549.66 L251.56 549.16 L251.93 547.99 L252.44 546.85 L253.15 546.42 L253.90 546.40 L254.65 546.42 L255.36 546.85 L255.87 547.99 L256.24 549.16 L256.70 549.66 L257.23 549.86 L257.75 550.10 L258.43 550.06 L259.51 549.50 L260.69 549.05 L261.48 549.25 L262.03 549.77 L262.55 550.32 L262.75 551.11 L262.30 552.29 L261.74 553.38 L261.70 554.05 L261.94 554.57 L262.14 555.10 L262.64 555.56 L263.81 555.93 L264.95 556.44 L265.38 557.15 L265.40 557.90Z" stroke="#475569" stroke-width="1"/>
    <circle cx="253.9" cy="557.9" r="3.7" stroke="#475569" stroke-width="1"/>
    <!-- terminal -->
    <path d="M245 599.6 L251.8 606.2 L245 612.8 M254 614.8 H262.8" stroke="#334155" stroke-width="1"/>
    <!-- bug -->
    <g stroke="#334155" stroke-width="1">
      <path d="M248.6 652.4 Q248.6 647.4 253.9 647.4 Q259.2 647.4 259.2 652.4 V658 Q259.2 664 253.9 664 Q248.6 664 248.6 658 Z"/>
      <path d="M249.2 650.6 H258.6 M253.9 656.6 V663.8"/>
      <path d="M250.6 648 L248.4 645.2 M257.2 648 L259.4 645.2"/>
      <path d="M248.6 652.8 L243.6 650 M259.2 652.8 L264.2 650 M248.6 656.6 H242.8 M259.2 656.6 H265 M248.8 660.4 L243.8 663.6 M259 660.4 L264 663.6"/>
    </g>
    <!-- fold arrows -->
    <path d="M311.9 560 H317.1 L314.5 563.3 Z M311.9 632 H317.1 L314.5 635.3 Z" fill="#555" stroke="none"/>
  </svg>

  <div class="ln" style="top:84px">1</div><div class="code" style="top:84px"><span style="color:#b90690;text-shadow:1px 0 0 #b90690,-1px 0 0 #b90690">---</span></div>
  <div class="ln" style="top:102px">2</div><div class="code" style="top:102px"><span class="k">respond_with:</span></div>
  <div class="ln" style="top:120px">3</div><div class="code" style="top:120px">  <span class="k">render:</span> 58df2485aea592c2</div>
  <div class="ln" style="top:138px">4</div><div class="code" style="top:138px">  <span class="k">wrap_with:</span> 4d7ed913c31fb92b</div>
  <div class="ln" style="top:156px">5</div><div class="code" style="top:156px">  <span class="k">frame:</span> cl-modal</div>
  <div class="ln" style="top:174px">6</div><div class="code" style="top:174px">  <span class="k">params:</span></div>
  <div class="ln" style="top:192px">7</div><div class="code" style="top:192px">    <span class="k">name_from_code:</span> helloz</div>
  <div class="ln" style="top:210px">8</div>
</div>
</body>
</html>
